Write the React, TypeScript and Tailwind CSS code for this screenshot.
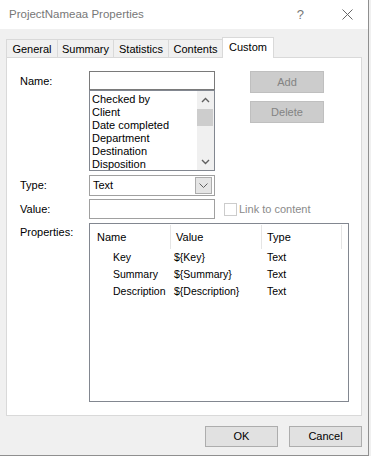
const tabs = [
  { label: "General", width: "w-[51px]" },
  { label: "Summary", width: "w-[56px]" },
  { label: "Statistics", width: "w-[55px]" },
  { label: "Contents", width: "w-[54px]" },
];

const listItems = ["Checked by", "Client", "Date completed", "Department", "Destination", "Disposition"];

const props = [
  { name: "Key", value: "${Key}", type: "Text" },
  { name: "Summary", value: "${Summary}", type: "Text" },
  { name: "Description", value: "${Description}", type: "Text" },
];

function Chevron({ dir }: { dir: "up" | "down" }) {
  return (
    <svg width="9" height="6" viewBox="0 0 9 6">
      <polyline
        points={dir === "up" ? "1,5 4.5,1.5 8,5" : "1,1 4.5,4.5 8,1"}
        fill="none"
        stroke="#606060"
        strokeWidth="1.4"
      />
    </svg>
  );
}

export default function App() {
  return (
    <div className="h-[456px] w-[371px] bg-[#f0f0f0] font-['Liberation_Sans',Arial,sans-serif] text-[11px] leading-[13px] text-black">
      <div className="flex h-[456px] w-[369px] flex-col border-b border-r border-[#8f8f8f]">
        {/* title bar */}
        <div className="flex h-[29px] items-center bg-white pl-[9px]">
          <span className="text-[11.5px] text-[#777]">ProjectNameaa Properties</span>
          <span className="ml-auto text-[13px] text-[#777]">?</span>
          <svg width="11" height="11" viewBox="0 0 11 11" className="ml-[38px] mr-[15px]">
            <path d="M0.5 0.5 L10.5 10.5 M10.5 0.5 L0.5 10.5" stroke="#666" strokeWidth="1" />
          </svg>
        </div>

        <div className="flex flex-1 flex-col px-[6px] pt-[8px]">
          {/* tabs */}
          <div className="flex items-end">
            {tabs.map((t) => (
              <div
                key={t.label}
                className={`${t.width} flex h-[18px] items-center justify-center border-l border-t border-[#d9d9d9] pt-[1px]`}
              >
                {t.label}
              </div>
            ))}
            <div className="relative z-10 -mb-px flex h-[21px] w-[52px] items-center justify-center border border-b-0 border-[#d9d9d9] bg-white pb-[2px]">
              Custom
            </div>
          </div>

          {/* panel */}
          <div className="flex h-[359px] w-[356px] flex-col border border-[#d9d9d9] bg-white pl-[13px] pt-[13px]">
            <div className="flex">
              <div className="w-[69px] pt-[4px]">Name:</div>
              <div className="flex w-[126px] flex-col">
                <div className="h-[19px] border border-[#7a7a7a] bg-white" />
                <div className="flex h-[81px] border border-[#828790] bg-white">
                  <div className="flex-1 overflow-hidden pl-[2px] pt-[2px]">
                    {listItems.map((i) => (
                      <div key={i} className="h-[13px] whitespace-nowrap">
                        {i}
                      </div>
                    ))}
                  </div>
                  <div className="flex w-[17px] flex-col bg-[#f0f0f0]">
                    <div className="flex h-[17px] items-center justify-center">
                      <Chevron dir="up" />
                    </div>
                    <div className="mt-[1px] h-[17px] w-[16px] bg-[#cdcdcd]" />
                    <div className="mt-auto flex h-[17px] items-center justify-center">
                      <Chevron dir="down" />
                    </div>
                  </div>
                </div>
              </div>
              <div className="ml-[35px] flex flex-col gap-[8px]">
                <div className="flex h-[22px] w-[74px] items-center justify-center border border-[#bfbfbf] bg-[#cccccc] text-[#838383]">
                  Add
                </div>
                <div className="flex h-[22px] w-[74px] items-center justify-center border border-[#bfbfbf] bg-[#cccccc] text-[#838383]">
                  Delete
                </div>
              </div>
            </div>

            <div className="mt-[4px] flex">
              <div className="w-[69px] pt-[4px]">Type:</div>
              <div className="flex h-[21px] w-[126px] items-center border border-[#a0a0a0] bg-white p-[1px]">
                <span className="flex-1 pl-[2px]">Text</span>
                <div className="mr-[1px] flex h-[17px] w-[17px] items-center justify-center border border-[#acacac] bg-[#e5e5e5]">
                  <svg width="9" height="5" viewBox="0 0 9 5">
                    <polyline points="0.5,0.5 4.5,4.5 8.5,0.5" fill="none" stroke="#606060" strokeWidth="1" />
                  </svg>
                </div>
              </div>
            </div>

            <div className="mt-[3px] flex items-start">
              <div className="w-[69px] pt-[4px]">Value:</div>
              <div className="h-[20px] w-[126px] border border-[#a0a0a0] bg-white" />
              <div className="ml-[9px] flex h-[20px] items-center">
                <div className="h-[13px] w-[13px] border border-[#cccccc] bg-white" />
                <span className="ml-[2px] text-[#8a8a8a]">Link to content</span>
              </div>
            </div>

            <div className="mt-[4px] flex">
              <div className="w-[69px] pt-[3px]">Properties:</div>
              <div className="h-[179px] w-[260px] border border-[#828790] bg-white">
                <div className="flex h-[25px] items-end">
                  <div className="flex h-[24px] w-[81px] items-center border-r border-[#e5e5e5] pl-[7px]">Name</div>
                  <div className="flex h-[24px] w-[91px] items-center border-r border-[#e5e5e5] pl-[5px]">Value</div>
                  <div className="flex h-[24px] w-[80px] items-center border-r border-[#e5e5e5] pl-[5px]">Type</div>
                </div>
                {props.map((p) => (
                  <div key={p.name} className="flex h-[17px] items-center text-[10.5px]">
                    <div className="w-[81px] whitespace-nowrap pl-[23px]">{p.name}</div>
                    <div className="w-[91px] whitespace-nowrap pl-[3px]">{p.value}</div>
                    <div className="w-[80px] pl-[5px]">{p.type}</div>
                  </div>
                ))}
              </div>
            </div>
          </div>

          {/* footer buttons */}
          <div className="mt-[10px] flex justify-end gap-[11px]">
            <div className="flex h-[21px] w-[73px] items-center justify-center border border-[#adadad] bg-[#e1e1e1]">OK</div>
            <div className="flex h-[21px] w-[73px] items-center justify-center border border-[#adadad] bg-[#e1e1e1]">Cancel</div>
          </div>
        </div>
      </div>
    </div>
  );
}
